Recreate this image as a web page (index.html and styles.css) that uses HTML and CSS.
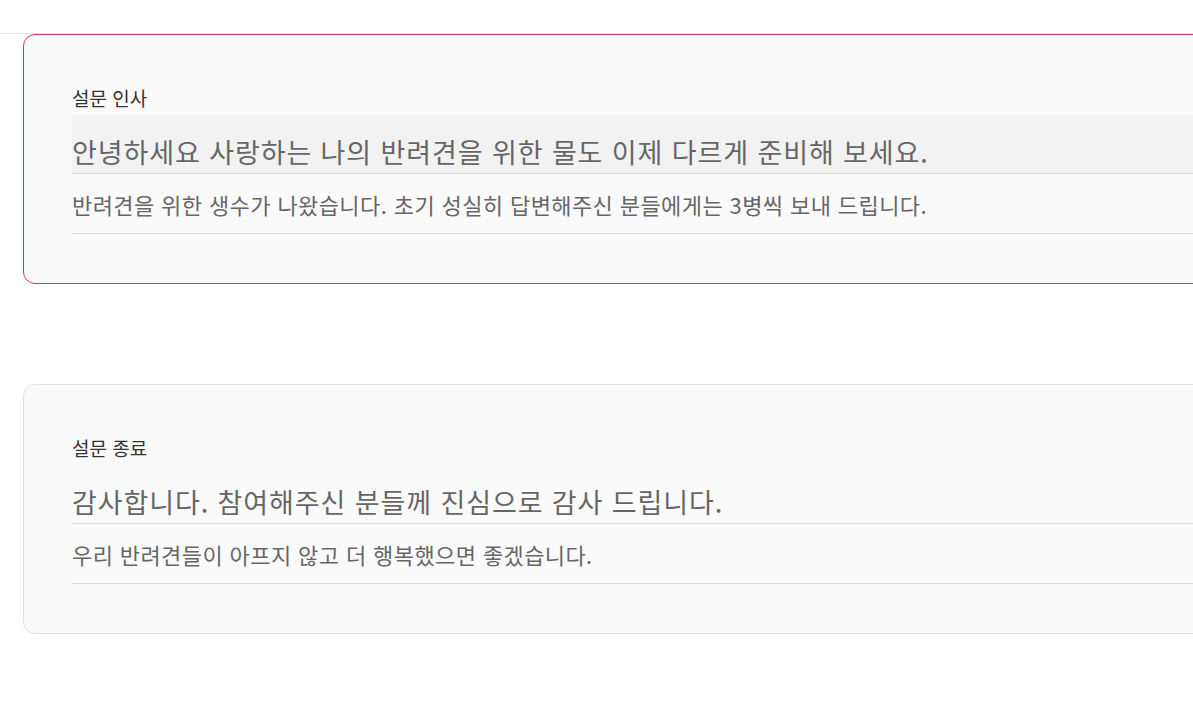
FILE: index.html
```html
<!DOCTYPE html>
<html lang="ko">
<head>
<meta charset="utf-8">
<title>설문</title>
<link rel="stylesheet" href="styles.css">
</head>
<body>
<header class="topbar"></header>
<main class="content">
  <section class="card card-active">
    <div class="label">설문 인사</div>
    <div class="field field-title field-focus">안녕하세요 사랑하는 나의 반려견을 위한 물도 이제 다르게 준비해 보세요.</div>
    <div class="field field-desc">반려견을 위한 생수가 나왔습니다. 초기 성실히 답변해주신 분들에게는 3병씩 보내 드립니다.</div>
  </section>
  <section class="card">
    <div class="label">설문 종료</div>
    <div class="field field-title">감사합니다. 참여해주신 분들께 진심으로 감사 드립니다.</div>
    <div class="field field-desc">우리 반려견들이 아프지 않고 더 행복했으면 좋겠습니다.</div>
  </section>
</main>
</body>
</html>
```
FILE: styles.css
```css
html, body {
  margin: 0;
  padding: 0;
  background: #ffffff;
  overflow: hidden;
  font-family: "Noto Sans CJK KR", "Noto Sans", sans-serif;
}
.topbar {
  height: 33px;
  border-bottom: 1px solid #e8e8e8;
}
.content {
  padding-left: 23px;
  width: 1400px;
  display: flex;
  flex-direction: column;
  gap: 100px;
}
.card {
  background: #fafafa;
  border: 1px solid #e0e0e0;
  border-radius: 12px;
  padding: 50px 48px 49px 48px;
  display: flex;
  flex-direction: column;
}
.card-active {
  border-color: #d6336c;
}
.label {
  font-size: 19px;
  line-height: 26px;
  color: #333333;
  margin-bottom: 4px;
}
.field {
  border-bottom: 1px solid #dddddd;
  color: #666666;
  white-space: nowrap;
}
.field-title {
  font-size: 27px;
  letter-spacing: 0.9px;
  line-height: 34px;
  padding: 20px 0 4px 0;
}
.field-focus {
  background: #f2f2f2;
}
.field-desc {
  font-size: 22px;
  letter-spacing: 0.4px;
  line-height: 30px;
  padding: 15px 0 14px 0;
}
```
